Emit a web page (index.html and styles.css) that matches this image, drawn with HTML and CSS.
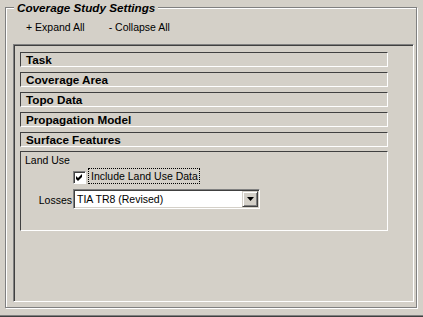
FILE: index.html
```html
<!DOCTYPE html>
<html lang="en">

<head>
    <meta charset="UTF-8">
    <meta name="viewport" content="width=device-width, initial-scale=1.0">
    <title>Coverage Study Settings</title>
    <link rel="stylesheet" href="styles.css">
</head>

<body>
    <div class="window">
        <fieldset class="settings">
            <legend>Coverage Study Settings</legend>

            <div class="toolbar">
                <span class="tool">+ Expand All</span>
                <span class="tool">- Collapse All</span>
            </div>

            <div class="panel">
                <div class="section">Task</div>
                <div class="section">Coverage Area</div>
                <div class="section">Topo Data</div>
                <div class="section">Propagation Model</div>
                <div class="section section-open">Surface Features</div>

                <div class="section-body">
                    <div class="group-title">Land Use</div>
                    <div class="form">
                        <span></span>
                        <label class="check">
                            <span class="checkbox">
                                <svg width="11" height="11" viewBox="0 0 11 11">
                                    <path d="M2 4 L4 6 L8 2 L8 5 L4 9 L2 7 Z" fill="#000" />
                                </svg>
                            </span>
                            <span class="check-label">Include Land Use Data</span>
                        </label>

                        <span class="field-label">Losses</span>
                        <div class="combo">
                            <span class="combo-value">TIA TR8 (Revised)</span>
                            <span class="combo-button">
                                <svg width="7" height="4" viewBox="0 0 7 4">
                                    <path d="M0 0 H7 L3.5 4 Z" fill="#000" />
                                </svg>
                            </span>
                        </div>
                    </div>
                </div>
            </div>
        </fieldset>
    </div>
</body>

</html>
```

FILE: styles.css
```css
body {
    margin: 0;
    padding: 0;
    background: #d4d0c8;
    color: #000;
    font-family: 'Liberation Sans', Arial, sans-serif;
    font-size: 10.5px;
}

.window {
    height: 317px;
    box-sizing: border-box;
    border-bottom: 1px solid #404040;
    box-shadow: inset 0 -1px 0 #808080;
    overflow: hidden;
}

/* etched group box */
.settings {
    margin: 0 6px 0 5px;
    padding: 0;
    min-width: 0;
    border: 1px solid #808080;
    box-shadow: inset 1px 1px 0 #fff, 1px 1px 0 #fff;
}

.settings legend {
    margin-left: 8px;
    padding: 0 3px;
    background: #d4d0c8;
    font-size: 11.7px;
    font-weight: bold;
    font-style: italic;
    line-height: 15px;
}

.toolbar {
    display: flex;
    gap: 24px;
    margin-top: 6px;
    padding-left: 20px;
    line-height: 13px;
}

/* sunken container */
.panel {
    height: 258px;
    box-sizing: border-box;
    margin: 10px 2px 5px 7px;
    padding: 7px 25px 0 6px;
    border: 1px solid;
    border-color: #808080 #fff #fff #808080;
    box-shadow: inset 1px 1px 0 #404040;
}

.section {
    height: 15px;
    box-sizing: border-box;
    margin-bottom: 5px;
    padding-left: 5px;
    border: 1px solid;
    border-color: #404040 #fff #fff #404040;
    font-size: 11.7px;
    font-weight: bold;
    line-height: 13px;
    white-space: nowrap;
}

.section-open {
    margin-bottom: 4px;
}

.section-body {
    height: 80px;
    box-sizing: border-box;
    padding-top: 2px;
    border: 1px solid;
    border-color: #404040 #fff #fff #404040;
}

.group-title {
    padding-left: 4px;
    line-height: 13px;
}

.form {
    display: grid;
    grid-template-columns: 52px auto;
    row-gap: 5px;
    margin-top: 1px;
}

.check {
    display: flex;
    align-items: flex-end;
    justify-self: start;
}

.checkbox {
    display: block;
    width: 13px;
    height: 13px;
    box-sizing: border-box;
    margin-right: 2px;
    border: 1px solid;
    border-color: #808080 #fff #fff #808080;
    box-shadow: inset 1px 1px 0 #404040;
    background: #fff;
}

.checkbox svg {
    display: block;
}

.check-label {
    padding: 0 1px 0 2px;
    border: 1px dotted #000;
    line-height: 14px;
    white-space: nowrap;
}

.field-label {
    justify-self: end;
    padding: 5px 1px 0 0;
    line-height: 13px;
}

.combo {
    display: flex;
    width: 187px;
    height: 20px;
    box-sizing: border-box;
    border: 1px solid;
    border-color: #808080 #fff #fff #808080;
    box-shadow: inset 1px 1px 0 #404040, inset -1px -1px 0 #d4d0c8;
    background: #fff;
    padding: 1px;
}

.combo-value {
    flex: 1;
    padding: 2px 0 0 2px;
    line-height: 13px;
    white-space: nowrap;
}

.combo-button {
    display: flex;
    align-items: center;
    justify-content: center;
    width: 16px;
    height: 16px;
    box-sizing: border-box;
    border: 1px solid;
    border-color: #d4d0c8 #404040 #404040 #d4d0c8;
    box-shadow: inset 1px 1px 0 #fff, inset -1px -1px 0 #808080;
    background: #d4d0c8;
}

.combo-button svg {
    display: block;
}
```
